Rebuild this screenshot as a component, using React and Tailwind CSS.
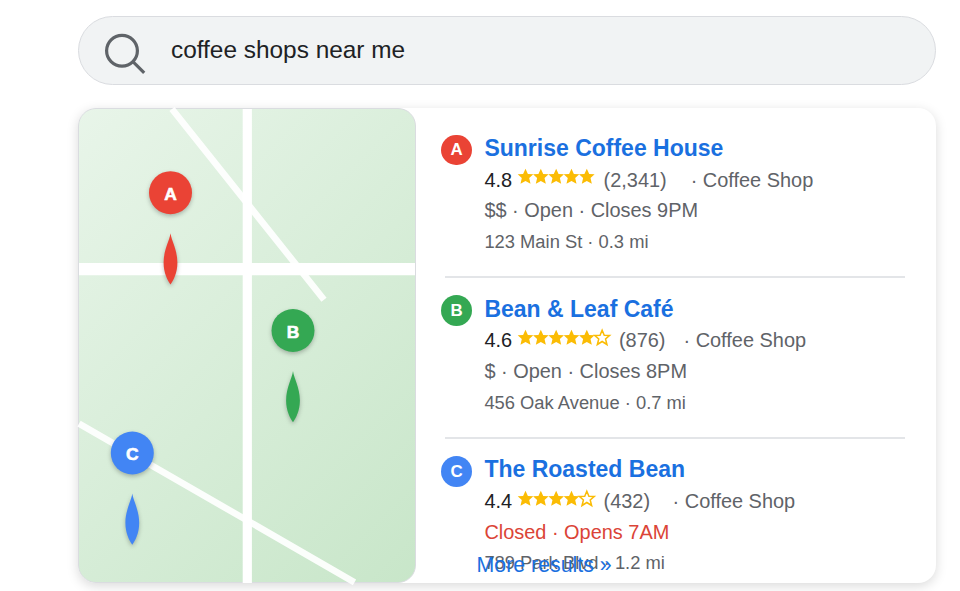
const LISTINGS = [
  { id: 'A', badge: 'bg-[#ea4335]', name: 'Sunrise Coffee House', nameTop: 'pt-0', rating: '4.8', full: 5, empty: 0, count: '(2,341)', gap: 'ml-[24px]', hours: '$$ · Open · Closes 9PM', tone: 'text-[#5f6368]', address: '123 Main St · 0.3 mi', addressLeading: 'leading-[31.8px]' },
  { id: 'B', badge: 'bg-[#34a853]', name: 'Bean & Leaf Café', nameTop: 'pt-[0.6px]', rating: '4.6', full: 5, empty: 1, count: '(876)', gap: 'ml-[18px]', hours: '$ · Open · Closes 8PM', tone: 'text-[#5f6368]', address: '456 Oak Avenue · 0.7 mi', addressLeading: 'leading-[31.8px]' },
  { id: 'C', badge: 'bg-[#4285f4]', name: 'The Roasted Bean', nameTop: 'pt-0', rating: '4.4', full: 4, empty: 1, count: '(432)', gap: 'ml-[22.5px]', hours: 'Closed · Opens 7AM', tone: 'text-[#db4437]', address: '789 Park Blvd · 1.2 mi', addressLeading: 'leading-[30.8px]' },
];

const PINS = [
  { id: 'A', x: 92.5, y: 84.7, color: '#ea4335' },
  { id: 'B', x: 215, y: 222.5, color: '#34a853' },
  { id: 'C', x: 54.3, y: 345, color: '#4285f4' },
];

const FULL_STAR = 'M0,-8.2 L2.4,-3 L7.8,-2.7 L3.7,1.1 L5,6.8 L0,4 L-5,6.8 L-3.7,1.1 L-7.8,-2.7 L-2.4,-3 Z';
const EMPTY_STAR = 'M0,-7.7 L2.1,-2.7 L7.5,-2.5 L3.4,1.1 L4.8,6.6 L0,3.6 L-4.8,6.6 L-3.4,1.1 L-7.5,-2.5 L-2.1,-2.7 Z';

function Stars({ full, empty }) {
  const total = full + empty;
  const width = total * 15.4;
  return (
    <svg className="shrink-0 overflow-visible" width={width} height="18" viewBox={`0 0 ${width} 18`}>
      {Array.from({ length: total }, (_, i) => (
        <path
          key={i}
          d={i < full ? FULL_STAR : EMPTY_STAR}
          transform={`translate(${7.5 + i * 15.33} 8.9)`}
          fill={i < full ? '#fbbc04' : 'none'}
          stroke={i < full ? 'none' : '#fbbc04'}
          strokeWidth="1.5"
        />
      ))}
    </svg>
  );
}

function Listing({ item }) {
  return (
    <div className="flex h-[160.7px] whitespace-nowrap">
      <div className={`mt-[2px] flex size-[30.6px] shrink-0 items-center justify-center rounded-full text-[16.9px] font-bold text-white ${item.badge}`}>
        {item.id}
      </div>
      <div className="ml-[12.4px]">
        <div className={`h-[32px] text-[23px] leading-[30.6px] font-bold text-[#1a70e0] ${item.nameTop}`}>{item.name}</div>
        <div className="flex h-[30.6px] text-[19.93px] leading-[30.6px] text-[#5f6368]">
          <span className="w-[33.5px] text-[#202124]">{item.rating}</span>
          <div className="mt-[3.5px]"><Stars full={item.full} empty={item.empty} /></div>
          <span className="ml-[8.7px]">{item.count}</span>
          <span className={item.gap}>· Coffee Shop</span>
        </div>
        <div className={`h-[31px] text-[19.93px] leading-[30.6px] ${item.tone}`}>{item.hours}</div>
        <div className={`text-[18.35px] text-[#5f6368] ${item.addressLeading}`}>{item.address}</div>
      </div>
    </div>
  );
}

function StreetMap() {
  return (
    <div className="h-[475px] w-[338px] shrink-0 rounded-[18px] border-[1.5px] border-[#dadce0] bg-linear-[135deg,#e8f5e9,#c8e6c9]">
      <svg className="-m-px block overflow-visible" width="338" height="475" viewBox="0 0 338 475">
        <g stroke="#fff" fill="none">
          <path d="M1 161.2H337" strokeWidth="12.3" />
          <path d="M169.3 1V475" strokeWidth="9.2" />
          <path d="M1 315.6L276.5 474.3M94 1L246 191.7" strokeWidth="6.6" strokeOpacity=".92" />
        </g>
        {PINS.map((pin) => (
          <g key={pin.id} transform={`translate(${pin.x} ${pin.y})`}>
            <g className="drop-shadow-[0_2px_2px_rgba(0,0,0,0.25)]" fill={pin.color}>
              <circle r="21.5" />
              <path d="M0 40.5C-1 48-6.9 57-6.9 70C-6.9 80-3 87.5 0 91.8C3 87.5 6.9 80 6.9 70C6.9 57 1 48 0 40.5Z" />
            </g>
            <text y="7.2" textAnchor="middle" fill="#fff" stroke="#fff" strokeWidth="0.6" className="text-[17.4px] font-bold">{pin.id}</text>
          </g>
        ))}
      </svg>
    </div>
  );
}

export default function App() {
  return (
    <main className="h-[591px] w-[960px] overflow-hidden bg-white pt-[16px] pl-[78px] font-['Liberation_Sans',Arial,sans-serif]">
      <div className="flex h-[69px] w-[858px] items-center rounded-full border-[1.5px] border-[#dadce0] bg-[#f1f3f4] pl-[24px]">
        <svg className="shrink-0" width="44" height="46" viewBox="0 0 44 46" fill="none" stroke="#5f6368" strokeWidth="3.2">
          <circle cx="19" cy="22.8" r="15.4" />
          <path d="M29.9 33.7L41.2 44.8" />
        </svg>
        <span className="ml-[24px] pb-[2px] text-[24.4px] leading-[32px] text-[#202124]">coffee shops near me</span>
      </div>
      <section className="mt-[23px] flex h-[475px] w-[858px] rounded-[18px] bg-white shadow-[0_3px_12px_rgba(0,0,0,0.15)]">
        <StreetMap />
        <div className="relative grow pt-[24.7px] pl-[25.4px]">
          {LISTINGS.map((item) => <Listing key={item.id} item={item} />)}
          <div className="absolute top-[167.7px] left-[29px] h-[2px] w-[460px] bg-[#e3e5e8]" />
          <div className="absolute top-[328.5px] left-[29px] h-[2px] w-[460px] bg-[#e3e5e8]" />
          <a className="absolute top-[442px] left-[60.5px] text-[21.35px] leading-[30px] whitespace-nowrap text-[#1a70e0]">More results »</a>
        </div>
      </section>
    </main>
  );
}
